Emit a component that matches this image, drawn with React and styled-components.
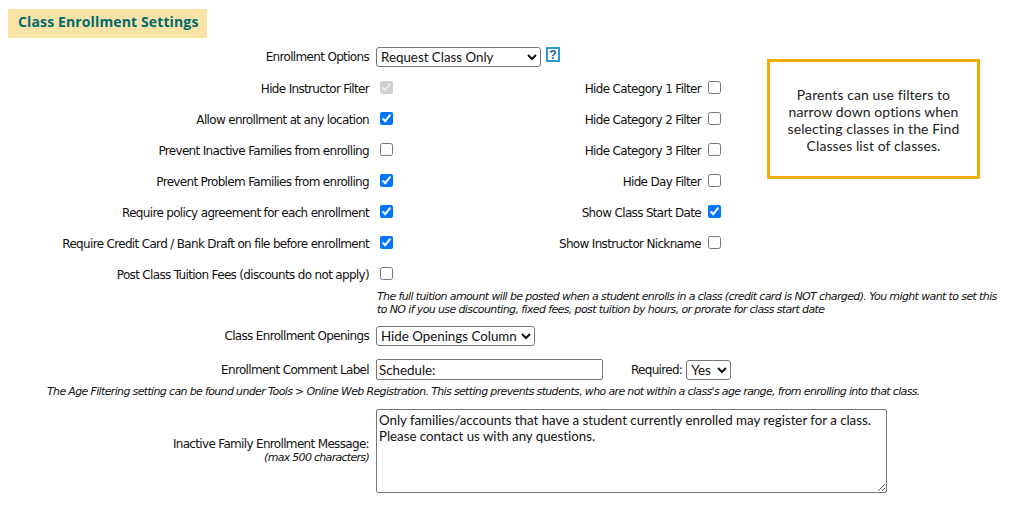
import React from "react";
import styled, { createGlobalStyle } from "styled-components";

const Global = createGlobalStyle`
  html, body { margin: 0; padding: 0; background: #fff; }
  body { font-family: "DejaVu Sans", sans-serif; font-size: 12px; color: #111; }
`;
const Page = styled.div`
  width: 1010px; height: 506px; overflow: hidden; padding: 9px 0 0 8px; box-sizing: border-box;
`;
const Banner = styled.h2`
  width: 199px; height: 29px; margin: 0; background: #f9e3a6; color: #006a71;
  font: 700 14px/26px "Open Sans", sans-serif; letter-spacing: 0.13px; padding-left: 10px; box-sizing: border-box; white-space: nowrap;
`;
const Top = styled.div`
  display: flex; margin-top: 4px;
`;
const Fields = styled.div`
  width: 759px; display: grid; grid-template-columns: 361px 345px; grid-auto-rows: 31px; align-items: center;
`;
const Row = styled.div`
  display: flex; align-items: center; grid-column: ${p => p.$col || 1};
  grid-row: ${p => p.$row}; margin-top: ${p => p.$mt || 0}px;
`;
const Label = styled.label`
  width: ${p => p.$w || 361}px; text-align: right; white-space: nowrap; flex: none;
  font-size: 12px; line-height: 16px; letter-spacing: -0.67px;
`;
const Check = styled.input.attrs({ type: "checkbox" })`
  width: 13px; height: 13px; margin: -2px 0 0 ${p => p.$ml || 11}px; flex: none;
`;
const Select = styled.select`
  font: 13.33px "Lato", sans-serif; height: 20px; width: ${p => p.$w}px; margin-left: ${p => p.$ml || 7}px;
  color: #111; background: #fff; border: 1px solid #767676; border-radius: 3px; padding: 0; box-sizing: border-box;
`;
const HelpIcon = styled.svg`
  width: 14px; height: 15px; margin: -4px 0 0 5px; flex: none;
`;
const Callout = styled.aside`
  width: 213px; height: 120px; box-sizing: border-box; border: 3px solid #f0ad00; margin-top: 17px;
  font: 14px/17px "Lato", sans-serif; letter-spacing: 0.08px; color: #222; text-align: center;
  padding: 24px 14px 0;
`;
const Note = styled.p`
  margin: ${p => p.$m}; width: ${p => p.$w}px; font: italic 11px/13px "DejaVu Sans", sans-serif;
  letter-spacing: ${p => p.$ls}px; color: #111;
`;
const Line = styled.div`
  display: flex; align-items: center; height: ${p => p.$h}px; margin-top: ${p => p.$t || 0}px;
`;
const TextInput = styled.input`
  width: 227px; height: 21px; margin-left: 7px; box-sizing: border-box; font: 13.33px "Lato", sans-serif; color: #111;
  border: 1px solid #767676; border-radius: 2px; padding: 0 2px;
`;
const Required = styled.span`
  margin-left: 28px; letter-spacing: -0.7px; white-space: nowrap;
`;
const MessageRow = styled.div`
  display: flex; align-items: center; margin-top: 11px;
`;
const MessageLabel = styled.div`
  width: 361px; flex: none; text-align: right; letter-spacing: -0.67px; line-height: 14px;
  em { display: block; font-size: 11px; letter-spacing: -0.7px; }
`;
const Message = styled.textarea`
  width: 511px; height: 84px; margin-left: 7px; box-sizing: border-box; font: 13.33px/16px "Lato", sans-serif; letter-spacing: -0.03px; color: #111;
  border: 1px solid #767676; border-radius: 2px; padding: 2px; resize: both;
`;

const left = [
  ["Hide Instructor Filter", true, true],
  ["Allow enrollment at any location", true],
  ["Prevent Inactive Families from enrolling", false],
  ["Prevent Problem Families from enrolling", true],
  ["Require policy agreement for each enrollment", true],
  ["Require Credit Card / Bank Draft on file before enrollment", true],
  ["Post Class Tuition Fees (discounts do not apply)", false],
];
const right = [
  ["Hide Category 1 Filter", false],
  ["Hide Category 2 Filter", false],
  ["Hide Category 3 Filter", false],
  ["Hide Day Filter", false],
  ["Show Class Start Date", true],
  ["Show Instructor Nickname", false],
];

export default function App() {
  return (
    <Page>
      <Global />
      <Banner>Class Enrollment Settings</Banner>
      <Top>
        <Fields>
          <Row $row={1} $col="1 / 3" $mt={-2}>
            <Label>Enrollment Options</Label>
            <Select $w={165} defaultValue="r"><option value="r">Request Class Only</option></Select>
            <HelpIcon viewBox="0 0 14 15">
              <rect x="1" y="1" width="12" height="13" fill="#fff" stroke="#2a9bd8" strokeWidth="2" />
              <text x="7" y="11.5" textAnchor="middle" fontSize="12" fontWeight="700" fontFamily="Liberation Sans" fill="#14659c">?</text>
            </HelpIcon>
          </Row>
          {left.map(([t, c, d], i) => (
            <Row key={t} $row={i + 2}>
              <Label>{t}</Label>
              <Check defaultChecked={c} disabled={d} />
            </Row>
          ))}
          {right.map(([t, c], i) => (
            <Row key={t} $row={i + 2} $col={2}>
              <Label $w={332}>{t}</Label>
              <Check $ml={7} defaultChecked={c} />
            </Row>
          ))}
        </Fields>
        <Callout>Parents can use filters to narrow down options when selecting classes in the Find Classes list of classes.</Callout>
      </Top>
      <Note $m="0 0 0 369px" $w={625} $ls={-0.62}>The full tuition amount will be posted when a student enrolls in a class (credit card is NOT charged). You might want to set this to NO if you use discounting, fixed fees, post tuition by hours, or prorate for class start date</Note>
      <Line $h={20} $t={10}>
        <Label>Class Enrollment Openings</Label>
        <Select $w={159} defaultValue="h"><option value="h">Hide Openings Column</option></Select>
      </Line>
      <Line $h={21} $t={13}>
        <Label>Enrollment Comment Label</Label>
        <TextInput defaultValue="Schedule:" />
        <Required>Required:</Required>
        <Select $w={45} $ml={4} defaultValue="y"><option value="y">Yes</option></Select>
      </Line>
      <Note $m="5px 0 0 39px" $w={900} $ls={-0.65}>The Age Filtering setting can be found under Tools &gt; Online Web Registration. This setting prevents students, who are not within a class's age range, from enrolling into that class.</Note>
      <MessageRow>
        <MessageLabel>Inactive Family Enrollment Message:<em>(max 500 characters)</em></MessageLabel>
        <Message defaultValue={"Only families/accounts that have a student currently enrolled may register for a class.\nPlease contact us with any questions."} />
      </MessageRow>
    </Page>
  );
}
